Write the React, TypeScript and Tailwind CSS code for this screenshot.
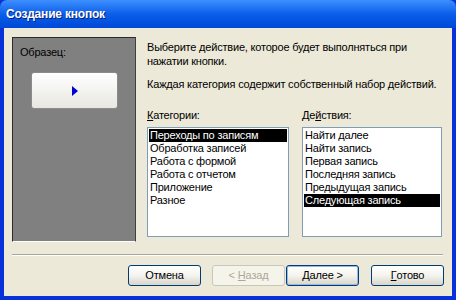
import React from 'react'

const categories = ['Переходы по записям', 'Обработка записей', 'Работа с формой', 'Работа с отчетом', 'Приложение', 'Разное']
const actions = ['Найти далее', 'Найти запись', 'Первая запись', 'Последняя запись', 'Предыдущая запись', 'Следующая запись']

function ListBox({ items, selected }: { items: string[]; selected: number }) {
    return (
        <div className="h-[110px] border border-[#7f9db9] bg-white pt-[1px] px-[1px]">
            {items.map((item, i) => (
                <div
                    key={item}
                    className={
                        i === selected
                            ? 'h-[13px] leading-[13px] pl-[1px] bg-black text-white whitespace-nowrap'
                            : 'h-[13px] leading-[13px] pl-[1px] text-black whitespace-nowrap'
                    }
                >
                    {item}
                </div>
            ))}
        </div>
    )
}

function XpButton({ children, disabled, def }: { children: React.ReactNode; disabled?: boolean; def?: boolean }) {
    const base = 'w-[73px] h-[21px] rounded-[3px] border flex items-center justify-center text-[11px]'
    if (disabled) {
        return <div className={`${base} border-[#c9c7ba] bg-[#f5f4ea] text-[#aca899]`}>{children}</div>
    }
    return (
        <div
            className={`${base} border-[#003c74] bg-gradient-to-b from-white via-[#f4f3ee] to-[#d8d5c8] text-black ${
                def ? 'shadow-[inset_0_0_0_1px_#9bb7e8]' : ''
            }`}
        >
            {children}
        </div>
    )
}

export default function App() {
    return (
        <div
            className="w-[456px] h-[300px] flex flex-col bg-[#0831d9]"
            style={{ fontFamily: '"Liberation Sans", Arial, sans-serif' }}
        >
            {/* title bar */}
            <div className="h-[28px] rounded-t-[7px] bg-gradient-to-b from-[#3d8fff] via-[#0a5ee8] to-[#0048d8] flex items-center pl-[6px]">
                <span className="text-white font-bold text-[12px] tracking-[-0.2px] [text-shadow:1px_1px_0_#0a1f7a]">
                    Создание кнопок
                </span>
            </div>

            {/* client */}
            <div className="flex-1 mx-[4px] mb-[4px] bg-[#ece9d8] text-[11px] tracking-[-0.2px] text-black flex flex-col">
                <div className="flex pt-[9px] pl-[8px] h-[214px]">
                    {/* sample panel */}
                    <div className="w-[124px] h-[205px] bg-[#808080] border-t border-l border-[#2b2b2b] border-r-[#404040] border-b border-b-white border-r flex flex-col">
                        <div className="mt-[7px] ml-[7px] leading-[14px]">Образец:</div>
                        <div className="mt-[13px] ml-[18px] w-[87px] h-[37px] rounded-[3px] border border-[#8b8b8b] bg-gradient-to-b from-white to-[#e8e7e0] flex items-center justify-center">
                            <svg width="6" height="10" viewBox="0 0 6 10">
                                <path d="M0 0 L6 5 L0 10 Z" fill="#0000d0" />
                            </svg>
                        </div>
                    </div>

                    {/* right column */}
                    <div className="ml-[11px] w-[296px] flex flex-col">
                        <p className="mt-[3px] leading-[14px] whitespace-nowrap">
                            Выберите действие, которое будет выполняться при
                            <br />
                            нажатии кнопки.
                        </p>
                        <p className="mt-[9px] leading-[14px] whitespace-nowrap">
                            Каждая категория содержит собственный набор действий.
                        </p>
                        <div className="mt-[17px] flex gap-[13px]">
                            <div className="w-[142px] flex flex-col">
                                <div className="leading-[14px] mb-[5px]">
                                    <span className="underline">К</span>атегории:
                                </div>
                                <ListBox items={categories} selected={0} />
                            </div>
                            <div className="w-[140px] flex flex-col">
                                <div className="leading-[14px] mb-[5px]">
                                    Де<span className="underline">й</span>ствия:
                                </div>
                                <ListBox items={actions} selected={5} />
                            </div>
                        </div>
                    </div>
                </div>

                {/* separator */}
                <div className="mt-[12px] mx-[8px] w-[431px] border-t border-t-[#aca899] border-b border-b-white" />

                {/* buttons */}
                <div className="mt-[9px] flex pl-[124px]">
                    <XpButton>Отмена</XpButton>
                    <div className="ml-[11px]">
                        <XpButton disabled>
                            &lt; <span className="underline ml-[3px]">Н</span>азад
                        </XpButton>
                    </div>
                    <div className="ml-[1px]">
                        <XpButton def>
                            <span className="underline">Д</span>алее &gt;
                        </XpButton>
                    </div>
                    <div className="ml-[12px]">
                        <XpButton>
                            <span className="underline">Г</span>отово
                        </XpButton>
                    </div>
                </div>
            </div>
        </div>
    )
}
